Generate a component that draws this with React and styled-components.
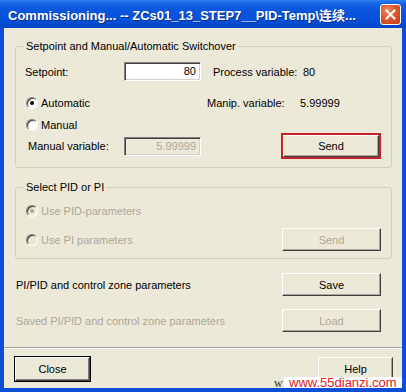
import React from "react";
import styled, { createGlobalStyle } from "styled-components";

const GlobalStyle = createGlobalStyle`
  html, body {
    margin: 0;
    padding: 0;
    background: #ffffff;
  }
  body {
    font-family: "Liberation Sans", Arial, sans-serif;
    font-size: 11px;
    color: #000;
  }
`;

const Window = styled.div`
  position: relative;
  width: 406px;
  height: 392px;
  display: flex;
  flex-direction: column;
  background: #0a4fd6;
  overflow: hidden;
`;

const TitleBar = styled.div`
  height: 28px;
  flex: none;
  display: flex;
  align-items: center;
  justify-content: space-between;
  padding: 0 5px 0 8px;
  box-sizing: border-box;
  background: linear-gradient(
    #2d7ff0 0%,
    #1665e6 12%,
    #0a56dc 35%,
    #0651d8 70%,
    #0548cc 90%,
    #0543c2 100%
  );
`;

const Title = styled.div`
  color: #fff;
  font-family: "Liberation Sans", "Noto Sans CJK SC", sans-serif;
  font-weight: bold;
  font-size: 13px;
  text-shadow: 1px 1px #0a2f8c;
  white-space: nowrap;
`;

const CloseBox = styled.div`
  width: 19px;
  height: 19px;
  border: 1px solid #fff;
  border-radius: 3px;
  background: radial-gradient(circle at 35% 30%, #f08a64 0%, #e0552c 45%, #c43b17 100%);
  display: flex;
  align-items: center;
  justify-content: center;
`;

const Body = styled.div`
  flex: 1;
  margin: 0 4px 4px;
  background: #ece9d8;
  display: flex;
  flex-direction: column;
`;

const Content = styled.div`
  padding: 11px 10px 0 11px;
  display: flex;
  flex-direction: column;
`;

const Group = styled.fieldset`
  margin: ${p => (p.$first ? "0" : "12px")} 0 0;
  padding: 0 10px ${p => p.$bottom}px 9px;
  border: 1px solid #d0d0bf;
  border-radius: 3px;
  min-width: 0;
`;

const Legend = styled.legend`
  padding: 0 2px;
  line-height: 14px;
  height: 14px;
  margin-left: -1px;
`;

const Row = styled.div`
  display: flex;
  align-items: center;
  height: ${p => p.$h}px;
  margin-top: ${p => p.$mt}px;
`;

const Label = styled.span`
  flex: none;
  width: ${p => (p.$w ? `${p.$w}px` : "auto")};
  margin-left: ${p => p.$ml || 0}px;
  color: ${p => (p.$disabled ? "#aca899" : "#000")};
  white-space: nowrap;
`;

const Field = styled.div`
  flex: none;
  width: 77px;
  height: 19px;
  box-sizing: border-box;
  border: 1px solid;
  border-color: #808080 #fff #fff #808080;
  box-shadow: inset 1px 1px #404040, inset -1px -1px #d4d0c8;
  background: ${p => (p.$disabled ? "#ece9d8" : "#fff")};
  color: ${p => (p.$disabled ? "#aca899" : "#000")};
  text-align: right;
  padding: 0 4px;
  line-height: 17px;
`;

const RadioLabel = styled.label`
  flex: none;
  display: flex;
  align-items: center;
  gap: 3px;
  width: ${p => (p.$w ? `${p.$w}px` : "auto")};
  margin-left: 1px;
  color: ${p => (p.$disabled ? "#aca899" : "#000")};
`;

const RadioDot = styled.span`
  width: 12px;
  height: 12px;
  box-sizing: border-box;
  border-radius: 50%;
  border: 1px solid;
  border-color: #808080 #fff #fff #808080;
  box-shadow: inset 1px 1px #404040;
  background: ${p => (p.$disabled ? "#ece9d8" : "#fff")};
  display: flex;
  align-items: center;
  justify-content: center;
  &::after {
    content: "";
    width: 4px;
    height: 4px;
    border-radius: 50%;
    background: ${p => (p.$checked ? (p.$disabled ? "#aca899" : "#000") : "transparent")};
  }
`;

const Spacer = styled.div`
  flex: 1;
`;

const Button = styled.div`
  flex: none;
  width: ${p => p.$w || 99}px;
  height: ${p => p.$h || 23}px;
  box-sizing: border-box;
  display: flex;
  align-items: center;
  justify-content: center;
  background: #ece9d8;
  border: 1px solid;
  border-color: #fff #404040 #404040 #fff;
  box-shadow: ${p =>
    p.$focus
      ? "inset -1px -1px #aca899, 0 0 0 2px #c3232b"
      : p.$default
      ? "inset -1px -1px #808080, 0 0 0 1px #000"
      : "inset -1px -1px #aca899"};
  margin-right: ${p => p.$mr || 0}px;
  color: ${p => (p.$disabled ? "#aca899" : "#000")};
`;

const OuterRow = styled(Row)`
  padding: 0 11px 0 1px;
`;

const Separator = styled.div`
  margin-top: 15px;
  border-top: 1px solid #aca899;
  border-bottom: 1px solid #fff;
`;

const Footer = styled.div`
  display: flex;
  justify-content: space-between;
  padding: 8px 9px 0 11px;
`;

const Watermark = styled.div`
  position: absolute;
  left: 284px;
  top: 377px;
  width: 118px;
  height: 11px;
  background: #fff;
  color: #e0201a;
  font-size: 13px;
  line-height: 11px;
  padding-left: 5px;
  box-sizing: border-box;
  white-space: nowrap;
  overflow: hidden;
`;

const WaterW = styled.span`
  position: absolute;
  left: 274px;
  top: 376px;
  font-family: "Liberation Serif", serif;
  font-size: 12px;
  color: #333;
`;

const Radio = ({ children, checked, disabled, w }) => (
  <RadioLabel $w={w} $disabled={disabled}>
    <RadioDot $checked={checked} $disabled={disabled} />
    {children}
  </RadioLabel>
);

export default function App() {
  return (
    <>
      <GlobalStyle />
      <Window>
        <TitleBar>
          <Title>Commissioning... -- ZCs01_13_STEP7__PID-Temp\连续...</Title>
          <CloseBox>
            <svg width="11" height="11" viewBox="0 0 11 11">
              <path d="M1.5 1.5 L9.5 9.5 M9.5 1.5 L1.5 9.5" stroke="#fff" strokeWidth="2" strokeLinecap="square" />
            </svg>
          </CloseBox>
        </TitleBar>
        <Body>
          <Content>
            <Group $first $bottom={8}>
              <Legend>Setpoint and Manual/Automatic Switchover</Legend>
              <Row $h={19} $mt={9}>
                <Label $w={99}>Setpoint:</Label>
                <Field>80</Field>
                <Label $ml={12} $w={90}>Process variable:</Label>
                <Label>80</Label>
              </Row>
              <Row $h={14} $mt={15}>
                <Radio checked w={181}>Automatic</Radio>
                <Label $w={93}>Manip. variable:</Label>
                <Label>5.99999</Label>
              </Row>
              <Row $h={14} $mt={8}>
                <Radio>Manual</Radio>
              </Row>
              <Row $h={26} $mt={1}>
                <Label $ml={3} $w={96}>Manual variable:</Label>
                <Field $disabled>5.99999</Field>
                <Spacer />
                <Button $w={96} $h={22} $focus $mr={2}>Send</Button>
              </Row>
            </Group>
            <Group $bottom={7}>
              <Legend>Select PID or PI</Legend>
              <Row $h={14} $mt={10}>
                <Radio checked disabled>Use PID-parameters</Radio>
              </Row>
              <Row $h={23} $mt={10}>
                <Radio disabled>Use PI parameters</Radio>
                <Spacer />
                <Button $disabled>Send</Button>
              </Row>
            </Group>
            <OuterRow $h={23} $mt={14}>
              <Label>PI/PID and control zone parameters</Label>
              <Spacer />
              <Button>Save</Button>
            </OuterRow>
            <OuterRow $h={23} $mt={13}>
              <Label $disabled>Saved PI/PID and control zone parameters</Label>
              <Spacer />
              <Button $disabled>Load</Button>
            </OuterRow>
          </Content>
          <Separator />
          <Footer>
            <Button $w={75} $h={24} $default>Close</Button>
            <Button $w={75} $h={24}>Help</Button>
          </Footer>
        </Body>
        <WaterW>w</WaterW>
        <Watermark>www.55dianzi.com</Watermark>
      </Window>
    </>
  );
}
